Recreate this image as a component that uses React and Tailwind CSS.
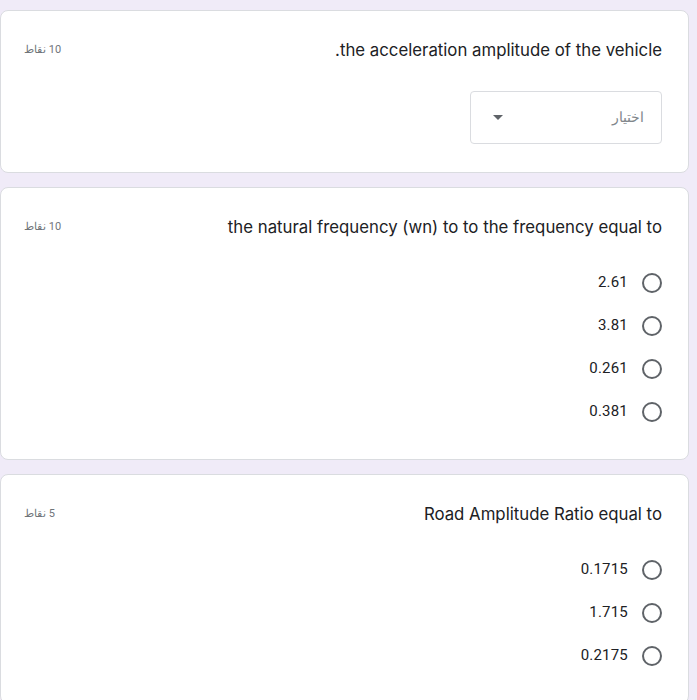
import React from "react";

const font = { fontFamily: "Roboto, 'Noto Sans', Arial, sans-serif" };

function Points({ value }) {
  return <span className="text-[11px] text-[#70757a] whitespace-nowrap">{value} نقاط</span>;
}

function TitleRow({ title, points }) {
  return (
    <div className="flex items-center justify-between h-6">
      <span className="text-[16.8px] leading-6 text-[#202124] font-['Inter','Roboto',sans-serif]">{title}</span>
      <Points value={points} />
    </div>
  );
}

function Radio({ label }) {
  return (
    <div className="flex items-center gap-[14px] h-[43px]">
      <span className="w-5 h-5 rounded-full border-2 border-[#5f6368] shrink-0" />
      <span className="text-[15px] text-[#202124] tracking-[0.2px]">{label}</span>
    </div>
  );
}

function Card({ children, bottom = "pb-7" }) {
  return (
    <div className={`bg-white border border-[#dadce0] rounded-lg pt-[27px] pr-[26px] pl-[23px] ${bottom}`}>
      {children}
    </div>
  );
}

export default function App() {
  return (
    <div dir="rtl" style={font} className="min-h-screen bg-[#f0ebf8] pt-[10px] pr-2 overflow-hidden">
      <div className="flex flex-col gap-[14px] w-[689px]">
        <Card>
          <TitleRow title="the acceleration amplitude of the vehicle." points="10" />
          <div className="mt-[29px] w-[192px] h-[53px] border border-[#dadce0] rounded flex items-center justify-between pr-[17px] pl-[22px]">
            <span className="text-[14px] text-[#80868b]">اختيار</span>
            <svg width="10" height="5" viewBox="0 0 10 5">
              <path d="M0 0 L10 0 L5 5 Z" fill="#5f6368" />
            </svg>
          </div>
        </Card>
        <Card bottom="pb-[26px]">
          <TitleRow title="the natural frequency (wn) to to the frequency equal to" points="10" />
          <div className="mt-[22px] flex flex-col">
            {["2.61", "3.81", "0.261", "0.381"].map(v => <Radio key={v} label={v} />)}
          </div>
        </Card>
        <Card bottom="pb-[26px]">
          <TitleRow title="Road Amplitude Ratio equal to" points="5" />
          <div className="mt-[22px] flex flex-col">
            {["0.1715", "1.715", "0.2175"].map(v => <Radio key={v} label={v} />)}
          </div>
        </Card>
      </div>
    </div>
  );
}
